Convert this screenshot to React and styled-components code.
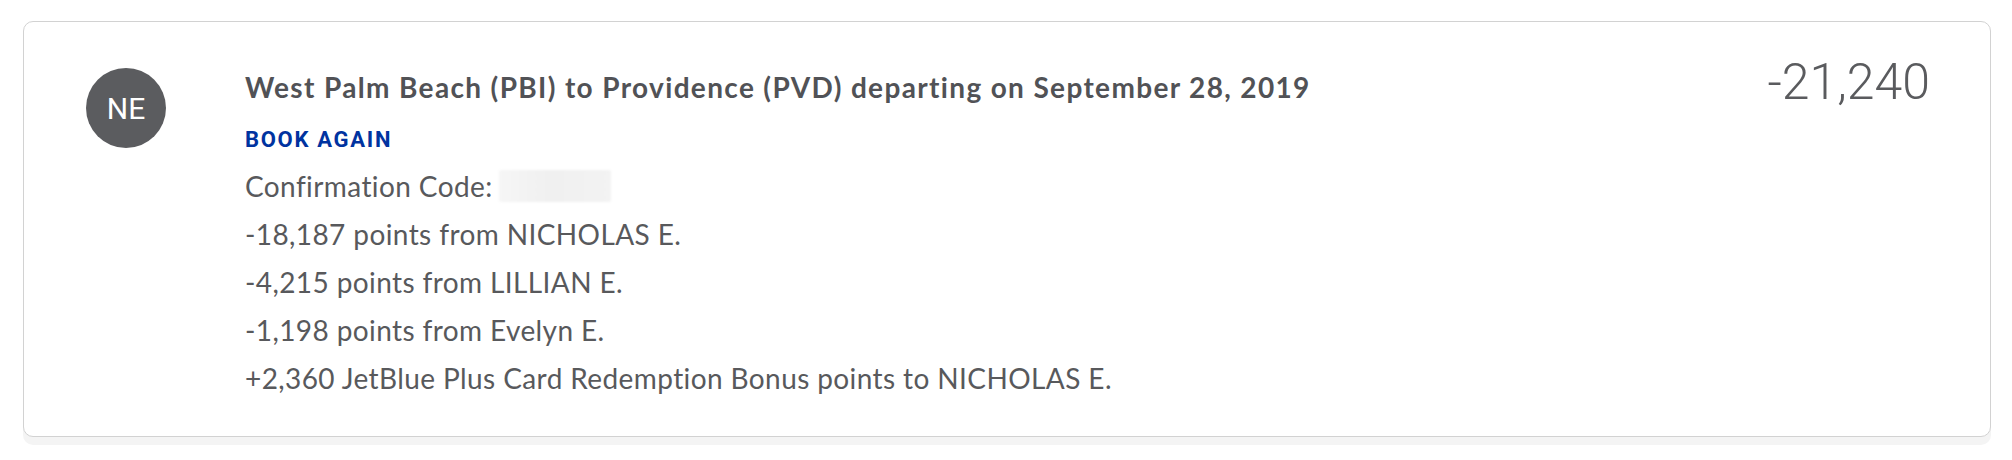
import React from "react";
import styled, { createGlobalStyle } from "styled-components";

const GlobalStyle = createGlobalStyle`
  body {
    margin: 0;
    background: #ffffff;
    font-family: "Lato", "Liberation Sans", sans-serif;
  }
`;

const activity = {
  initials: "NE",
  title: "West Palm Beach (PBI) to Providence (PVD) departing on September 28, 2019",
  action: "BOOK AGAIN",
  total: "-21,240",
  lines: [
    "-18,187 points from NICHOLAS E.",
    "-4,215 points from LILLIAN E.",
    "-1,198 points from Evelyn E.",
    "+2,360 JetBlue Plus Card Redemption Bonus points to NICHOLAS E.",
  ],
};

const ActivityPage = () => {
  return (
    <>
      <GlobalStyle />
      <Page>
        <Card>
          <Avatar>{activity.initials}</Avatar>
          <Details>
            <Title>{activity.title}</Title>
            <ActionLink href="#">{activity.action}</ActionLink>
            <Lines>
              {/* confirmation code is blurred out in the original */}
              <Line>
                Confirmation Code:
                <Redacted />
              </Line>
              {activity.lines.map((line) => (
                <Line key={line}>{line}</Line>
              ))}
            </Lines>
          </Details>
          <Total>{activity.total}</Total>
        </Card>
      </Page>
    </>
  );
};
export default ActivityPage;

const Page = styled.div`
  padding: 21px 21px 16px 23px;
`;

const Card = styled.div`
  display: flex;
  align-items: flex-start;
  padding: 47px 60px 34px 62px;
  border: 1px solid #d2d2d2;
  border-radius: 10px;
  background-color: #ffffff;
  box-shadow: 0 8px 0 0 #f4f4f4;
`;

const Avatar = styled.div`
  flex: none;
  width: 80px;
  height: 80px;
  margin-top: -1px;
  border-radius: 50%;
  background-color: #5b5c5f;
  color: #ffffff;
  font-family: "Roboto", sans-serif;
  font-size: 30px;
  font-weight: 400;
  display: flex;
  align-items: center;
  justify-content: center;
`;

const Details = styled.div`
  flex: 1;
  display: flex;
  flex-direction: column;
  align-items: flex-start;
  margin-left: 79px;
  color: #58595c;
`;

const Title = styled.h2`
  margin: 0;
  font-size: 28px;
  font-weight: 700;
  line-height: 36px;
  letter-spacing: 1.35px;
  color: #515256;
  white-space: nowrap;
`;

const ActionLink = styled.a`
  margin-top: 21px;
  font-family: "Roboto", sans-serif;
  font-size: 22px;
  font-weight: 700;
  line-height: 28px;
  letter-spacing: 1.7px;
  color: #0033a0;
  text-decoration: none;
`;

const Lines = styled.div`
  margin-top: 8px;
  display: flex;
  flex-direction: column;
`;

const Line = styled.div`
  font-size: 28px;
  font-weight: 400;
  line-height: 48px;
  letter-spacing: 0.4px;
  white-space: nowrap;
`;

const Redacted = styled.span`
  display: inline-block;
  vertical-align: top;
  width: 112px;
  height: 32px;
  margin: 8px 0 0 6px;
  border-radius: 2px;
  background: linear-gradient(90deg, #f6f6f6, #f0f0f0 45%, #f3f3f3);
  filter: blur(1px);
`;

const Total = styled.div`
  flex: none;
  margin-top: -12px;
  font-family: "Roboto", sans-serif;
  font-size: 50px;
  font-weight: 300;
  line-height: 50px;
  color: #5a5b5e;
`;
